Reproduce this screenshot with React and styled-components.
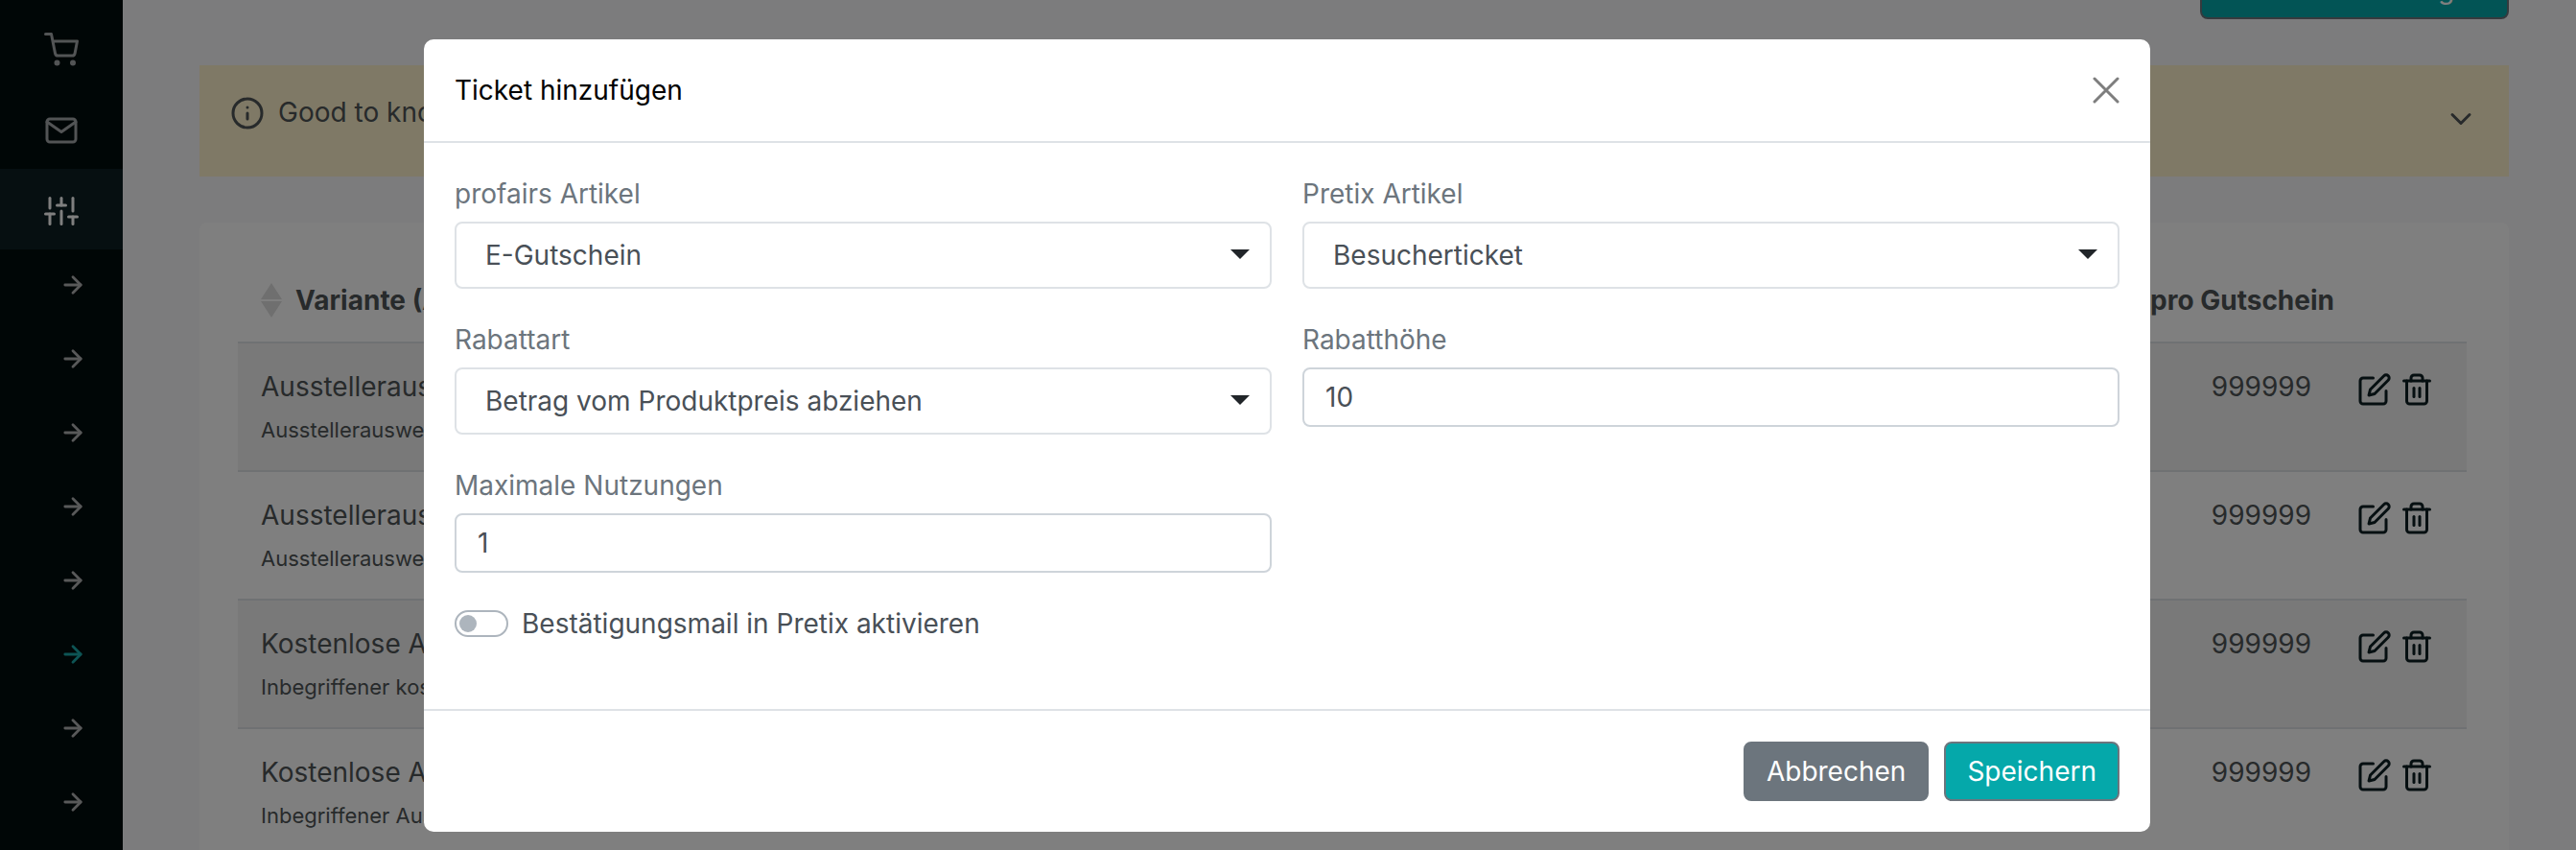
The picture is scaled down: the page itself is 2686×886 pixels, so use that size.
import styled, { createGlobalStyle } from 'styled-components';
import {
  FiShoppingCart,
  FiMail,
  FiSliders,
  FiArrowRight,
  FiInfo,
  FiChevronDown,
  FiPlus,
  FiEdit,
  FiTrash2,
} from 'react-icons/fi';

const GlobalStyle = createGlobalStyle`
  *, *::before, *::after {
    box-sizing: border-box;
  }

  body {
    margin: 0;
    overflow: hidden;
    background-color: #f8f8fb;
    color: #4f5456;
    font-family: Inter, "Liberation Sans", sans-serif;
    font-size: 28px;
    line-height: 42px;
  }

  button, input, select {
    font: inherit;
    color: inherit;
  }
`;

const Page = styled.div`
  display: flex;
  height: 100vh;
  overflow: hidden;
`;

const Sidebar = styled.nav`
  flex: none;
  width: 128px;
  padding-top: 8px;
  background-color: #010c0d;
`;

const NavItem = styled.a`
  display: flex;
  justify-content: center;
  padding: 26px 0 22px;
  color: ${({ $active }) => ($active ? '#fff' : '#a4a8aa')};
  background-color: ${({ $active }) => ($active ? '#0c1e22' : 'transparent')};
`;

const SubNavItem = styled.a`
  display: flex;
  justify-content: flex-end;
  padding: 23px 38px 26px 0;
  color: ${({ $active }) => ($active ? '#1ba9a9' : '#b0b2b3')};

  > svg {
    stroke-width: 2.4;
  }
`;

const Main = styled.main`
  flex: 1;
  min-width: 0;
  padding: 0 70px 0 80px;
`;

const Toolbar = styled.div`
  display: flex;
  justify-content: flex-end;
  align-items: flex-end;
  height: 20px;
  margin-bottom: 48px;
`;

const Button = styled.button`
  display: flex;
  align-items: center;
  gap: 8px;
  padding: 8px 22px;
  color: #fff;
  background-color: ${({ $primary }) => ($primary ? '#05a8aa' : '#6c757d')};
  border: 2px solid #6c757d;
  border-radius: 8px;
`;

const Alert = styled.section`
  display: flex;
  align-items: flex-start;
  gap: 14px;
  margin-bottom: 48px;
  padding: 28px 32px 42px;
  background-color: #fff3cd;

  > svg {
    margin-top: 4px;
  }
`;

const AlertText = styled.span`
  flex: 1;
`;

const AlertToggle = styled.button`
  display: flex;
  margin-top: 10px;
  padding: 0;
  background: none;
  border: 0;
`;

const Card = styled.section`
  padding: 40px 44px 40px 40px;
  background-color: #fff;
  border-radius: 8px;
`;

const Table = styled.table`
  width: 100%;
  table-layout: fixed;
  border-spacing: 0;
`;

const HeadCell = styled.th`
  width: ${({ $width }) => $width || 'auto'};
  padding: 20px 0 22px 24px;
  font-weight: 700;
  text-align: ${({ $align }) => $align || 'left'};
`;

const SortLabel = styled.span`
  display: flex;
  align-items: center;
  gap: 14px;
`;

const Row = styled.tr`
  &:nth-child(odd) {
    background-color: #f2f2f2;
  }
`;

const Cell = styled.td`
  padding: 24px;
  vertical-align: top;
  text-align: ${({ $align }) => $align || 'left'};
  border-top: 2px solid #dee2e6;
`;

const SubText = styled.div`
  margin-top: 6px;
  font-size: 22px;
  line-height: 36px;
`;

const Actions = styled.div`
  display: flex;
  gap: 8px;
  padding-top: 6px;
`;

const IconButton = styled.button`
  display: flex;
  padding: 0;
  color: #0c1e22;
  background: none;
  border: 0;
`;

const Overlay = styled.div`
  position: fixed;
  inset: 0;
  padding: 41px 16px 0 14px;
  background-color: rgba(0, 0, 0, 0.5);
`;

const Dialog = styled.form`
  max-width: 1800px;
  margin: 0 auto;
  background-color: #fff;
  border-radius: 10px;
`;

const DialogHeader = styled.header`
  display: flex;
  justify-content: space-between;
  align-items: center;
  padding: 32px;
  border-bottom: 2px solid #dee2e6;
`;

const DialogTitle = styled.h5`
  margin: 0;
  color: #000;
  font-size: 28px;
  font-weight: 400;
`;

const CloseButton = styled.button`
  display: flex;
  padding: 0;
  color: #000;
  background: none;
  border: 0;
  opacity: 0.5;
`;

const DialogBody = styled.div`
  padding: 32px 32px 68px;
  color: #495057;
`;

const FieldGrid = styled.div`
  display: grid;
  grid-template-columns: 1fr 1fr;
  gap: 32px;
  margin-bottom: 32px;
`;

const Field = styled.div`
  display: flex;
  flex-direction: column;
  gap: 8px;
`;

const Label = styled.label`
  color: #6c757d;
`;

const Input = styled.input`
  width: 100%;
  height: 62px;
  padding: 8px 22px;
  background-color: #fff;
  border: 2px solid #ced4da;
  border-radius: 8px;
`;

const SelectBox = styled.div`
  position: relative;
`;

const StyledSelect = styled.select`
  display: block;
  width: 100%;
  height: 70px;
  padding: 0 64px 0 30px;
  appearance: none;
  background-color: #fff;
  border: 2px solid #dee2e6;
  border-radius: 8px;
`;

const Caret = styled.svg`
  position: absolute;
  top: 29px;
  right: 23px;
  pointer-events: none;
`;

const SwitchLabel = styled.label`
  display: flex;
  align-items: center;
  gap: 14px;
`;

const Switch = styled.input`
  display: flex;
  align-items: center;
  width: 56px;
  height: 28px;
  margin: 0;
  padding: 0 3px;
  appearance: none;
  background-color: #fff;
  border: 2px solid #adb5bd;
  border-radius: 14px;

  &::before {
    content: '';
    width: 18px;
    height: 18px;
    background-color: #adb5bd;
    border-radius: 50%;
  }

  &:checked {
    justify-content: flex-end;
  }
`;

const DialogFooter = styled.footer`
  display: flex;
  justify-content: flex-end;
  gap: 16px;
  padding: 32px;
  border-top: 2px solid #dee2e6;
`;

const variants = [
  { id: 1, name: 'Ausstellerausweis', info: 'Ausstellerausweis', uses: 999999 },
  { id: 2, name: 'Ausstellerausweis', info: 'Ausstellerausweis', uses: 999999 },
  { id: 3, name: 'Kostenlose Ausweise', info: 'Inbegriffener kostenloser Ausweis', uses: 999999 },
  { id: 4, name: 'Kostenlose Ausweise', info: 'Inbegriffener Ausweis', uses: 999999 },
];

const subPages = [1, 2, 3, 4, 5, 6, 7, 8];

function SortIcon() {
  return (
    <svg width="22" height="36" viewBox="0 0 22 36" fill="#dedede">
      <path d="M11 0 22 17H0z" />
      <path d="M11 36 0 19h22z" />
    </svg>
  );
}

function SelectField({ id, label, value }) {
  return (
    <Field>
      <Label htmlFor={id}>{label}</Label>
      <SelectBox>
        <StyledSelect id={id} defaultValue={value}>
          <option value={value}>{value}</option>
        </StyledSelect>
        <Caret width="20" height="10" viewBox="0 0 20 10" fill="#212529">
          <path d="M0 0h20L10 10z" />
        </Caret>
      </SelectBox>
    </Field>
  );
}

function InputField({ id, label, value }) {
  return (
    <Field>
      <Label htmlFor={id}>{label}</Label>
      <Input id={id} type="text" inputMode="numeric" defaultValue={value} />
    </Field>
  );
}

function TicketDialog() {
  return (
    <Overlay>
      <Dialog role="dialog" aria-modal="true" aria-labelledby="dialog-title">
        <DialogHeader>
          <DialogTitle id="dialog-title">Ticket hinzufügen</DialogTitle>
          <CloseButton type="button" aria-label="Schließen">
            <svg width="28" height="28" viewBox="0 0 28 28" stroke="currentColor" strokeWidth="3" strokeLinecap="round">
              <path d="M2 2l24 24M26 2 2 26" />
            </svg>
          </CloseButton>
        </DialogHeader>
        <DialogBody>
          <FieldGrid>
            <SelectField id="profairs-item" label="profairs Artikel" value="E-Gutschein" />
            <SelectField id="pretix-item" label="Pretix Artikel" value="Besucherticket" />
            <SelectField id="discount-type" label="Rabattart" value="Betrag vom Produktpreis abziehen" />
            <InputField id="discount-value" label="Rabatthöhe" value="10" />
            <InputField id="max-uses" label="Maximale Nutzungen" value="1" />
          </FieldGrid>
          <SwitchLabel>
            <Switch type="checkbox" role="switch" />
            Bestätigungsmail in Pretix aktivieren
          </SwitchLabel>
        </DialogBody>
        <DialogFooter>
          <Button type="button">Abbrechen</Button>
          <Button type="button" $primary>Speichern</Button>
        </DialogFooter>
      </Dialog>
    </Overlay>
  );
}

function App() {
  return (
    <>
      <GlobalStyle />
      <Page>
        <Sidebar>
          <NavItem href="#shop" aria-label="Shop"><FiShoppingCart size={36} /></NavItem>
          <NavItem href="#mail" aria-label="Mail"><FiMail size={36} /></NavItem>
          <NavItem href="#settings" aria-label="Einstellungen" $active><FiSliders size={36} /></NavItem>
          {subPages.map((page) => (
            <SubNavItem key={page} href={`#settings-${page}`} aria-label={`Einstellung ${page}`} $active={page === 6}>
              <FiArrowRight size={28} />
            </SubNavItem>
          ))}
        </Sidebar>
        <Main>
          <Toolbar>
            <Button type="button" $primary><FiPlus size={28} />Ticket hinzufügen</Button>
          </Toolbar>
          <Alert>
            <FiInfo size={36} />
            <AlertText>Good to know</AlertText>
            <AlertToggle type="button" aria-label="Aufklappen"><FiChevronDown size={36} /></AlertToggle>
          </Alert>
          <Card>
            <Table>
              <thead>
                <tr>
                  <HeadCell>
                    <SortLabel><SortIcon />Variante (Artikel)</SortLabel>
                  </HeadCell>
                  <HeadCell $align="right">Nutzungen pro Gutschein</HeadCell>
                  <HeadCell $width="138px" aria-label="Aktionen" />
                </tr>
              </thead>
              <tbody>
                {variants.map((variant) => (
                  <Row key={variant.id}>
                    <Cell>
                      {variant.name}
                      <SubText>{variant.info}</SubText>
                    </Cell>
                    <Cell $align="right">{variant.uses}</Cell>
                    <Cell>
                      <Actions>
                        <IconButton type="button" aria-label="Bearbeiten"><FiEdit size={36} /></IconButton>
                        <IconButton type="button" aria-label="Löschen"><FiTrash2 size={36} /></IconButton>
                      </Actions>
                    </Cell>
                  </Row>
                ))}
              </tbody>
            </Table>
          </Card>
        </Main>
      </Page>
      <TicketDialog />
    </>
  );
}

export default App;
